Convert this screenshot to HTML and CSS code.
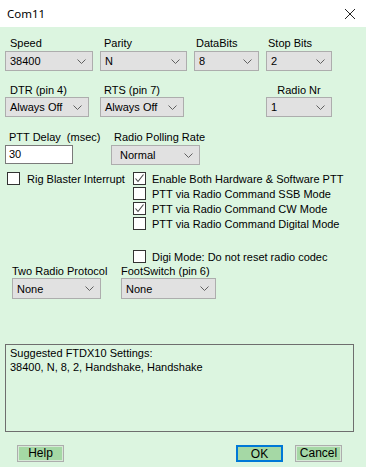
FILE: index.html
```html
<!DOCTYPE html>
<html lang="en">
<head>
  <meta charset="UTF-8" />
  <title>Com11</title>
  <link rel="stylesheet" href="styles.css">
</head>
<body>
  <div class="window">
    <div class="titlebar">
      <span class="title">Com11</span>
      <svg class="close" width="12" height="12" viewBox="0 0 12 12"><path d="M1 1L11 11M11 1L1 11" stroke="#222" stroke-width="1"/></svg>
    </div>

    <div class="content">
      <div class="row row-1">
        <div class="field speed">
          <label>Speed</label>
          <div class="combo"><span>38400</span><svg class="chev" width="9" height="5" viewBox="0 0 9 5"><path d="M0.5 0.5L4.5 4.5L8.5 0.5" fill="none" stroke="#606060"/></svg></div>
        </div>
        <div class="field parity">
          <label>Parity</label>
          <div class="combo"><span>N</span><svg class="chev" width="9" height="5" viewBox="0 0 9 5"><path d="M0.5 0.5L4.5 4.5L8.5 0.5" fill="none" stroke="#606060"/></svg></div>
        </div>
        <div class="field databits">
          <label>DataBits</label>
          <div class="combo"><span>8</span><svg class="chev" width="9" height="5" viewBox="0 0 9 5"><path d="M0.5 0.5L4.5 4.5L8.5 0.5" fill="none" stroke="#606060"/></svg></div>
        </div>
        <div class="field stopbits">
          <label>Stop Bits</label>
          <div class="combo"><span>2</span><svg class="chev" width="9" height="5" viewBox="0 0 9 5"><path d="M0.5 0.5L4.5 4.5L8.5 0.5" fill="none" stroke="#606060"/></svg></div>
        </div>
      </div>

      <div class="row row-2">
        <div class="field dtr">
          <label>DTR (pin 4)</label>
          <div class="combo"><span>Always Off</span><svg class="chev" width="9" height="5" viewBox="0 0 9 5"><path d="M0.5 0.5L4.5 4.5L8.5 0.5" fill="none" stroke="#606060"/></svg></div>
        </div>
        <div class="field rts">
          <label>RTS (pin 7)</label>
          <div class="combo"><span>Always Off</span><svg class="chev" width="9" height="5" viewBox="0 0 9 5"><path d="M0.5 0.5L4.5 4.5L8.5 0.5" fill="none" stroke="#606060"/></svg></div>
        </div>
        <div class="field radionr">
          <label>Radio Nr</label>
          <div class="combo"><span>1</span><svg class="chev" width="9" height="5" viewBox="0 0 9 5"><path d="M0.5 0.5L4.5 4.5L8.5 0.5" fill="none" stroke="#606060"/></svg></div>
        </div>
      </div>

      <div class="row row-3">
        <div class="field pttdelay">
          <label>PTT Delay&nbsp; (msec)</label>
          <div class="textbox">30</div>
        </div>
        <div class="field polling">
          <label>Radio Polling Rate</label>
          <div class="combo"><span>Normal</span><svg class="chev" width="9" height="5" viewBox="0 0 9 5"><path d="M0.5 0.5L4.5 4.5L8.5 0.5" fill="none" stroke="#606060"/></svg></div>
        </div>
      </div>

      <div class="checks">
        <div class="check-col left">
          <div class="check"><span class="box"></span>Rig Blaster Interrupt</div>
        </div>
        <div class="check-col right">
          <div class="check"><span class="box"><svg width="11" height="11" viewBox="0 0 11 11"><path d="M1.5 5.5L4 8.5L9.5 1.5" fill="none" stroke="#444" stroke-width="1.1"/></svg></span>Enable Both Hardware &amp; Software PTT</div>
          <div class="check"><span class="box"></span>PTT via Radio Command SSB Mode</div>
          <div class="check"><span class="box"><svg width="11" height="11" viewBox="0 0 11 11"><path d="M1.5 5.5L4 8.5L9.5 1.5" fill="none" stroke="#444" stroke-width="1.1"/></svg></span>PTT via Radio Command CW Mode</div>
          <div class="check"><span class="box"></span>PTT via Radio Command Digital Mode</div>
          <div class="check digi"><span class="box"></span>Digi Mode: Do not reset radio codec</div>
        </div>
      </div>

      <div class="row row-4">
        <div class="field tworadio">
          <label>Two Radio Protocol</label>
          <div class="combo tall"><span>None</span><svg class="chev" width="9" height="5" viewBox="0 0 9 5"><path d="M0.5 0.5L4.5 4.5L8.5 0.5" fill="none" stroke="#606060"/></svg></div>
        </div>
        <div class="field footswitch">
          <label>FootSwitch (pin 6)</label>
          <div class="combo tall"><span>None</span><svg class="chev" width="9" height="5" viewBox="0 0 9 5"><path d="M0.5 0.5L4.5 4.5L8.5 0.5" fill="none" stroke="#606060"/></svg></div>
        </div>
      </div>

      <div class="memo">
        <p>Suggested FTDX10 Settings:</p>
        <p>38400, N, 8, 2, Handshake, Handshake</p>
      </div>

      <div class="buttons">
        <button class="btn help">Help</button>
        <button class="btn ok">OK</button>
        <button class="btn cancel">Cancel</button>
      </div>
    </div>
  </div>
</body>
</html>
```

FILE: styles.css
```css
* {
  box-sizing: border-box;
}
body {
  margin: 0;
  font-family: "Liberation Sans", Arial, sans-serif;
  font-size: 11px;
  color: #000;
  background: #dcf5e0;
}
.window {
  width: 366px;
  height: 467px;
  overflow: hidden;
}
.titlebar {
  height: 27px;
  background: #fff;
  display: flex;
  align-items: center;
  justify-content: space-between;
  padding: 0 10px 0 7px;
}
.title {
  font-family: "Noto Sans", sans-serif;
  font-size: 11.5px;
  color: #000;
}
.content {
  height: 440px;
  background: #dcf5e0;
  padding-top: 9px;
}
.row {
  display: flex;
  align-items: flex-start;
}
.field {
  display: flex;
  flex-direction: column;
}
.field label {
  line-height: 14px;
  height: 14px;
  white-space: nowrap;
}
.combo {
  height: 20px;
  margin-top: 1px;
  background: #e1e1e1;
  border: 1px solid #adadad;
  display: flex;
  align-items: center;
  padding-left: 4px;
  white-space: nowrap;
}
.combo.tall {
  height: 21px;
  margin-top: 0;
}
.chev {
  flex: none;
  margin-left: auto;
  margin-right: 6px;
}

/* row 1 */
.row-1 .speed { margin-left: 5px; width: 88px; }
.row-1 .speed label { padding-left: 5px; }
.row-1 .parity { margin-left: 7px; width: 87px; }
.row-1 .parity label { padding-left: 4px; }
.row-1 .databits { margin-left: 7px; width: 65px; }
.row-1 .databits label { padding-left: 2px; }
.row-1 .stopbits { margin-left: 7px; width: 66px; }
.row-1 .stopbits label { padding-left: 2px; }

/* row 2 */
.row-2 { margin-top: 12px; }
.row-2 .field label { margin-bottom: -1px; }
.row-2 .dtr { margin-left: 5px; width: 84px; }
.row-2 .dtr label { padding-left: 5px; }
.row-2 .rts { margin-left: 11px; width: 84px; }
.row-2 .rts label { padding-left: 4px; }
.row-2 .radionr { margin-left: 82px; width: 66px; }
.row-2 .radionr label { text-align: center; }

/* row 3 */
.row-3 { margin-top: 13px; }
.row-3 .pttdelay { margin-left: 5px; width: 68px; }
.row-3 .pttdelay label { padding-left: 4px; }
.row-3 .polling { margin-left: 38px; width: 89px; }
.row-3 .polling label { padding-left: 3px; }
.row-3 .combo { padding-left: 8px; }
.textbox {
  height: 19px;
  margin-top: 1px;
  background: #fff;
  border: 1px solid #7a7a7a;
  padding-left: 3px;
  line-height: 17px;
}

/* checkboxes */
.checks {
  display: flex;
  margin-top: 6px;
}
.check-col.left {
  width: 133px;
  padding-left: 7px;
}
.check {
  height: 15px;
  display: flex;
  align-items: center;
  gap: 7px;
  white-space: nowrap;
}
.check-col.right .check {
  gap: 6px;
}
.check.digi {
  margin-top: 18px;
}
.box {
  width: 13px;
  height: 13px;
  flex: none;
  background: #fff;
  border: 1px solid #333;
  display: flex;
  align-items: center;
  justify-content: center;
}

/* row 4 */
.row-4 { margin-top: 1px; }
.row-4 .field label { line-height: 13px; height: 13px; }
.row-4 .tworadio { margin-left: 12px; width: 89px; }
.row-4 .footswitch { margin-left: 20px; width: 95px; }

/* memo */
.memo {
  margin: 45px 0 0 5px;
  width: 349px;
  height: 88px;
  border: 1px solid #6e6e6e;
  padding: 1px 4px;
}
.memo p {
  margin: 0;
  line-height: 14px;
}

/* buttons */
.buttons {
  display: flex;
  margin-top: 13px;
}
.btn {
  width: 47px;
  height: 17px;
  padding: 0;
  font-family: "Liberation Sans", Arial, sans-serif;
  font-size: 12px;
  line-height: 15px;
  color: #000;
  background: #a5d8a5;
  border: 1px solid #adadad;
  box-shadow: inset 0 0 0 1px #d7e9d7;
}
.btn.help { margin-left: 17px; }
.btn.ok {
  margin-left: 172px;
  border: 2px solid #0078d7;
  box-shadow: none;
}
.btn.cancel { margin-left: 12px; }
```
